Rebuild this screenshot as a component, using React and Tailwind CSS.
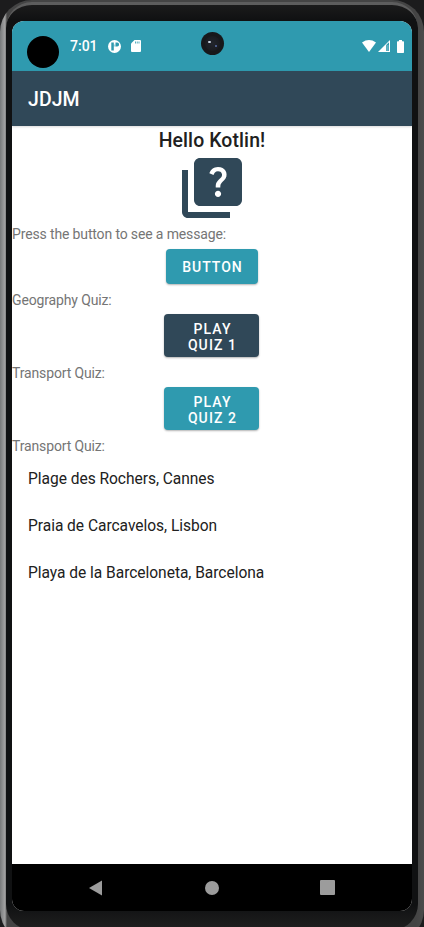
import React from 'react';

const beaches = [
  'Plage des Rochers, Cannes',
  'Praia de Carcavelos, Lisbon',
  'Playa de la Barceloneta, Barcelona',
];

function Label({ children }) {
  return <p className="h-[19px] text-[14px] leading-[20px] tracking-[-0.14px] text-[#757575]">{children}</p>;
}

function StatusBar() {
  return (
    <div className="relative flex h-[50px] items-center bg-[#2f9aaf] pl-[15px] pr-[8px] text-white">
      <div className="mt-[11px] size-8 rounded-full bg-black" />
      <span className="ml-[11px] w-[27px] whitespace-nowrap text-[14px] font-medium leading-4">7:01</span>
      <svg className="ml-[11px] size-[13px]" viewBox="0 0 13 13">
        <circle cx="6.5" cy="6.5" r="6.500" fill="#fff" />
        <path d="M3.300 2.600h2.500v8H3.300zM7.500 2.600h1.700a1.900 1.900 0 0 1 0 3.800H7.500z" fill="#2f9aaf" />
        <path d="M5.200 4.500h2.300v2H5.200z" fill="#2f9aaf" opacity=".4" />
      </svg>
      <svg className="ml-[10px] h-3 w-[10px]" viewBox="0 0 10 12">
        <path d="M3.5 0H9a1 1 0 0 1 1 1v10a1 1 0 0 1-1 1H1a1 1 0 0 1-1-1V3.5z" fill="#fff" />
        <path d="M4 1.400h.8v2.200H4zM5.800 1.400h.8v2.200h-.8zM7.600 1.400h.8v2.200h-.8z" fill="#2f9aaf" />
      </svg>
      <div className="absolute left-[189px] top-[11px] size-[23px] rounded-full bg-[#17181b]">
        <div className="m-[4px] flex size-[15px] items-center justify-center rounded-full bg-[radial-gradient(circle,#22252d,#17181b)]">
          <div className="mb-[4px] mr-[4px] h-[2px] w-[3px] rounded-full bg-[#c7d0df]" />
          <div className="mt-[4px] size-[2px] rounded-full bg-[#5a6ea8]" />
        </div>
      </div>
      <div className="ml-auto flex items-center">
        <svg className="h-3 w-[14px]" viewBox="0 0 14 12">
          <path d="M0 2.500Q7-2.300 14 2.500L7 12z" fill="#fff" />
        </svg>
        <svg className="ml-[2px] size-3" viewBox="0 0 12 12">
          <path d="M12 0v12H0z" fill="#fff" />
          <path d="M8.200 5 11 2.200V11H8.200z" fill="#2f9aaf" />
          <path d="M9.300 5h1.200v6H9.300z" fill="#fff" opacity=".35" />
        </svg>
        <svg className="ml-[7px] h-[13px] w-[7px]" viewBox="0 0 7 13">
          <path d="M2 0h3v1.200h1.300q.7 0 .7.700v10.400q0 .700-.7.700H.7Q0 13 0 12.300V1.900q0-.7.7-.7H2z" fill="#fff" />
        </svg>
      </div>
    </div>
  );
}

function QuizIcon() {
  return (
    <svg className="mx-auto block size-[72px]" viewBox="0 0 24 24" fill="#304858">
      <path d="M4 6H2v14c0 1.100.9 2 2 2h14v-2H4V6z" />
      <path d="M20 2H8c-1.100 0-2 .9-2 2v12c0 1.100.9 2 2 2h12c1.100 0 2-.9 2-2V4c0-1.100-.9-2-2-2zm-5.990 13c-.59 0-1.050-.47-1.050-1.050 0-.59.470-1.040 1.050-1.040.590 0 1.040.450 1.040 1.040-.010.580-.450 1.050-1.040 1.050zm2.500-6.170c-.63.930-1.230 1.210-1.560 1.810-.130.240-.180.400-.180 1.180h-1.520c0-.410-.060-1.080.260-1.650.410-.730 1.180-1.160 1.630-1.800.480-.680.210-1.940-1.140-1.940-.880 0-1.320.670-1.500 1.230l-1.370-.570C11.510 5.960 12.520 5 13.990 5c1.230 0 2.080.560 2.510 1.260.370.600.580 1.730.010 2.570z" />
    </svg>
  );
}

function NavBar() {
  return (
    <div className="flex h-[47px] items-center bg-black px-[77px]">
      <svg className="h-4 w-[13px]" viewBox="0 0 13 16">
        <path d="M13 .6v14.800L0 8z" fill="#9c9c9c" />
      </svg>
      <div className="ml-[103px] size-[14px] rounded-full bg-[#9c9c9c]" />
      <div className="ml-auto size-[15px] rounded-[1px] bg-[#9c9c9c]" />
    </div>
  );
}

export default function App() {
  return (
    <div className="h-[927px] w-[424px] overflow-hidden bg-[#1c1c1d] font-['Roboto','Liberation_Sans',sans-serif]">
      <div className="h-[942px] w-[424px] rounded-[32px] bg-[linear-gradient(to_right,#77797a_0,#a3a3a3_5px,#444_7px,#444_416px,#4b4b4b_424px)] px-[6px] pb-[12px] pt-[2px]">
        <div className="h-full rounded-[26px] border-t-[3px] border-t-[#5d5d5d] bg-[linear-gradient(to_bottom,#1b1b1b,#101112_15px,#101112_900px,#202020)] px-[6px] pt-4">
          <div className="flex h-[890px] flex-col overflow-hidden rounded-[12px] bg-white">
            <StatusBar />
            <header className="relative flex h-[55px] items-center bg-[#304858] pl-4 shadow-[0_1px_2px_rgba(0,0,0,0.15)]">
              <h1 className="mt-[2px] text-[19.46px] font-medium leading-6 tracking-[0.1px] text-white">JDJM</h1>
            </header>
            <main className="flex-1">
              <h2 className="h-[26px] text-center text-[19.46px] font-medium leading-[30px] tracking-[0.1px] text-[#202020]">Hello Kotlin!</h2>
              <QuizIcon />
              <Label>Press the button to see a message:</Label>
              <div className="flex pb-[6px] pl-[154px] pt-[6px]">
                <button className="h-[35px] w-[92px] rounded-[4px] bg-[#2f9aaf] pl-px pt-px text-[14px] font-medium leading-4 tracking-[1px] text-white shadow-[0_1px_2px_rgba(0,0,0,0.3)]">BUTTON</button>
              </div>
              <Label>Geography Quiz:</Label>
              <div className="flex pb-[6px] pl-[152px] pt-[5px]">
                <button className="h-[43px] w-[95px] rounded-[4px] bg-[#304858] pl-[2px] pt-[2px] text-[14px] font-medium leading-4 tracking-[1.100px] text-white shadow-[0_1px_2px_rgba(0,0,0,0.3)]">PLAY<br />QUIZ 1</button>
              </div>
              <Label>Transport Quiz:</Label>
              <div className="flex pb-[6px] pl-[152px] pt-[5px]">
                <button className="h-[43px] w-[95px] rounded-[4px] bg-[#2f9aaf] pl-[2px] pt-[2px] text-[14px] font-medium leading-4 tracking-[1.100px] text-white shadow-[0_1px_2px_rgba(0,0,0,0.3)]">PLAY<br />QUIZ 2</button>
              </div>
              <Label>Transport Quiz:</Label>
              <ul className="pt-px">
                {beaches.map((name) => (
                  <li key={name} className="flex h-[46.7px] items-center pl-4 text-[15.57px] leading-5 tracking-[-0.04px] text-[#212121]">{name}</li>
                ))}
              </ul>
            </main>
            <NavBar />
          </div>
        </div>
      </div>
    </div>
  );
}
